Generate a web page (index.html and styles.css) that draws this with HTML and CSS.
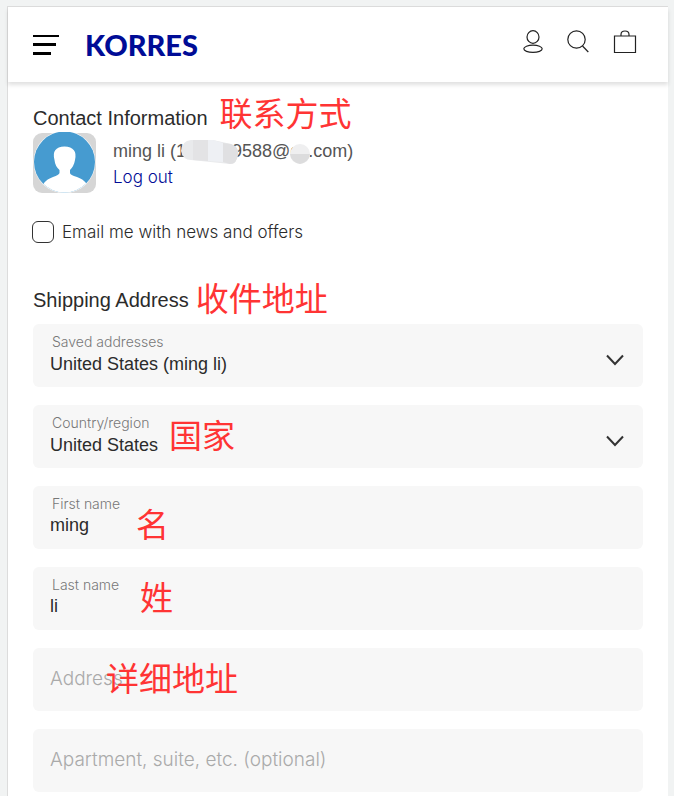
FILE: index.html
```html
<!DOCTYPE html>
<html lang="en">
<head>
  <meta charset="utf-8">
  <meta name="viewport" content="width=device-width, initial-scale=1">
  <title>KORRES - Checkout</title>
  <link rel="stylesheet" href="styles.css">
</head>
<body>
  <div class="page">
    <header class="header">
      <button type="button" class="icon-button" aria-label="Menu">
        <svg width="26" height="20" viewBox="0 0 26 20"><path d="M0 0h26v2H0zM0 8h23v3H0zM0 17h18v3H0z"/></svg>
      </button>
      <a href="#" class="logo">KORRES</a>
      <nav class="header-icons">
        <a href="#" aria-label="Account">
          <svg width="20" height="24" viewBox="0 0 20 24"><ellipse cx="10" cy="7" rx="6" ry="6.300"/><ellipse cx="10" cy="18.800" rx="9.200" ry="3.600"/></svg>
        </a>
        <a href="#" aria-label="Search">
          <svg width="22" height="24" viewBox="0 0 22 24"><circle cx="9.500" cy="9.500" r="8.700"/><path d="M15.500 16l5.800 6"/></svg>
        </a>
        <a href="#" aria-label="Cart">
          <svg width="24" height="24" viewBox="0 0 24 24"><path d="M1.500 6h21v16.500h-21zM8 6V4.500q0-3.500 4-3.500t4 3.500V6"/></svg>
        </a>
      </nav>
    </header>

    <main class="checkout">
      <div class="section-title">
        <h2>Contact Information</h2>
        <span class="note" lang="zh">联系方式</span>
      </div>
      <div class="customer">
        <svg class="avatar" width="63" height="61" viewBox="0 0 63 61">
          <defs><clipPath id="face"><circle cx="31.500" cy="30" r="30.500"/></clipPath></defs>
          <rect y="1" width="63" height="60" rx="9" fill="#d6d6d6"/>
          <circle cx="31.500" cy="30" r="31" fill="#fff"/>
          <circle cx="31.500" cy="30" r="30.500" fill="#469bd0"/>
          <path clip-path="url(#face)" fill="#fff" d="M6 61L11 51Q14 47 20 45Q26 43 26.500 41V38Q22 34 21.500 28Q18 15 31.500 14.500Q45 15 42 28Q41 34 37 38V41Q37 43 44 45Q50 47 53 51L58 61Z"/>
        </svg>
        <div class="customer-info">
          <p>ming li (1<span class="mask mask-wide"><svg width="60" height="24" viewBox="0 0 60 24"><path d="M2 11Q3 1 12 0H34L52 4Q60 7 59 14Q58 24 51 24L12 20Q4 20 2 11Z" fill="#e9eaec"/><path d="M14 0H29V21L14 20Z" fill="#e3e3e5"/><path d="M29 0H34L44 3V22L29 21Z" fill="#eef0f4"/><path d="M44 3L52 4Q60 7 59 14Q58 24 51 24L44 22Z" fill="#e0e0e2"/></svg></span>9588@q<span class="mask"><svg width="20" height="20" viewBox="0 0 20 20"><circle cx="10" cy="10" r="10" fill="#efeff0"/><path d="M0 10H20Q19 18 10 20Q1 18 0 10Z" fill="#dcdcdd"/></svg></span>.com)</p>
          <a href="#" class="logout">Log out</a>
        </div>
      </div>

      <form>
        <label class="check">
          <input type="checkbox" name="offers">
          Email me with news and offers
        </label>

        <div class="section-title shipping-title">
          <h2>Shipping Address</h2>
          <span class="note" lang="zh">收件地址</span>
        </div>

        <div class="fields">
          <div class="field">
            <label for="saved">Saved addresses</label>
            <select id="saved"><option>United States (ming li)</option></select>
            <svg class="arrow" width="18" height="12" viewBox="0 0 18 12"><path d="M1 1.500l8 8.500 8-8.500"/></svg>
          </div>
          <div class="field">
            <label for="country">Country/region</label>
            <select id="country"><option>United States</option></select>
            <svg class="arrow" width="18" height="12" viewBox="0 0 18 12"><path d="M1 1.500l8 8.500 8-8.500"/></svg>
            <span class="note note-country" lang="zh">国家</span>
          </div>
          <div class="field">
            <label for="first-name">First name</label>
            <input type="text" id="first-name" value="ming">
            <span class="note note-first" lang="zh">名</span>
          </div>
          <div class="field">
            <label for="last-name">Last name</label>
            <input type="text" id="last-name" value="li">
            <span class="note note-last" lang="zh">姓</span>
          </div>
          <div class="field">
            <input type="text" class="empty" placeholder="Address" aria-label="Address">
            <span class="note note-address" lang="zh">详细地址</span>
          </div>
          <div class="field">
            <input type="text" class="empty" placeholder="Apartment, suite, etc. (optional)" aria-label="Apartment, suite, etc. (optional)">
          </div>
        </div>
      </form>
    </main>
  </div>
</body>
</html>
```
FILE: styles.css
```css
* {
  box-sizing: border-box;
}

body {
  margin: 0;
  padding: 6px 6px 0 7px;
  background-color: #f1f3f3;
  font-family: "Liberation Sans", Arial, sans-serif;
  color: #2b2b2b;
}

.page {
  background-color: #fff;
  border-top: 1px solid #dcdcdc;
  border-left: 1px solid #dcdcdc;
}

.header {
  display: flex;
  align-items: center;
  height: 75px;
  padding: 0 31px 0 25px;
  box-shadow: 0 3px 4px rgba(0, 0, 0, 0.12);
}

.icon-button {
  display: flex;
  padding: 0;
  border: none;
  background: none;
  cursor: pointer;
}

.logo {
  margin-left: 26px;
  font: 900 29px/36px Lato, sans-serif;
  color: #000c96;
  text-decoration: none;
}

.header-icons {
  display: flex;
  gap: 24px;
  margin-left: auto;
  padding-bottom: 6px;
}

.header-icons a {
  display: flex;
}

.header-icons svg {
  fill: none;
  stroke: #222;
  stroke-width: 1.2;
}

.checkout {
  padding: 21px 25px 20px;
}

.section-title {
  display: flex;
  align-items: center;
  gap: 12px;
  height: 30px;
}

h2 {
  margin: 0;
  font-size: 20px;
  font-weight: normal;
}

.note {
  font: 33px/40px "Noto Sans CJK SC", sans-serif;
  color: #ff3434;
  white-space: nowrap;
}

.section-title .note {
  padding-bottom: 12px;
}

.shipping-title {
  gap: 7px;
}

.shipping-title .note {
  padding-bottom: 6px;
}

.customer {
  display: flex;
  gap: 17px;
  margin-top: -1px;
}

.customer-info {
  padding-top: 6px;
  font-size: 18px;
  line-height: 26px;
  color: #555;
}

.customer-info p {
  margin: 0;
}

.mask {
  display: inline-block;
  position: relative;
  width: 8px;
  height: 20px;
  vertical-align: middle;
}

.mask-wide {
  width: 46px;
}

.mask svg {
  position: absolute;
  top: 2px;
  right: -2px;
}

.mask-wide svg {
  top: -2px;
  right: -7px;
}

.logout {
  font: 300 17px/26px Inter, sans-serif;
  color: #000c96;
  text-decoration: none;
}

.check {
  display: flex;
  align-items: center;
  gap: 8px;
  margin: 25px 0 39px;
  font: 300 17px/28px Inter, sans-serif;
}

.check input {
  appearance: none;
  width: 22px;
  height: 22px;
  margin: 0 0 0 -1px;
  border: 1px solid #333;
  border-radius: 6px;
}

.fields {
  display: grid;
  gap: 18px;
  padding-top: 9px;
}

.field {
  display: grid;
  position: relative;
}

.field > label,
.field > input,
.field > select,
.field > .arrow {
  grid-area: 1 / 1;
}

.field label {
  z-index: 1;
  justify-self: start;
  padding: 8px 0 0 19px;
  font: 300 14px/20px Inter, sans-serif;
  color: #777;
}

.field input,
.field select {
  appearance: none;
  width: 100%;
  height: 63px;
  padding: 24px 17px 8px;
  border: none;
  border-radius: 6px;
  background-color: #f7f7f7;
  font: 18px "Liberation Sans", Arial, sans-serif;
  color: #2b2b2b;
}

.field .empty {
  padding: 0 17px 2px;
  font: 300 19px Inter, sans-serif;
}

.empty::placeholder {
  color: #aaa;
}

.arrow {
  align-self: center;
  justify-self: end;
  margin: 8px 19px 0 0;
  fill: none;
  stroke: #333;
  stroke-width: 2;
  pointer-events: none;
}

.field .note {
  position: absolute;
  top: 9px;
}

.note-country {
  left: 136px;
}

.field .note-first {
  top: 17px;
  left: 103px;
}

.note-last {
  left: 107px;
}

.note-address {
  left: 73px;
}
```
